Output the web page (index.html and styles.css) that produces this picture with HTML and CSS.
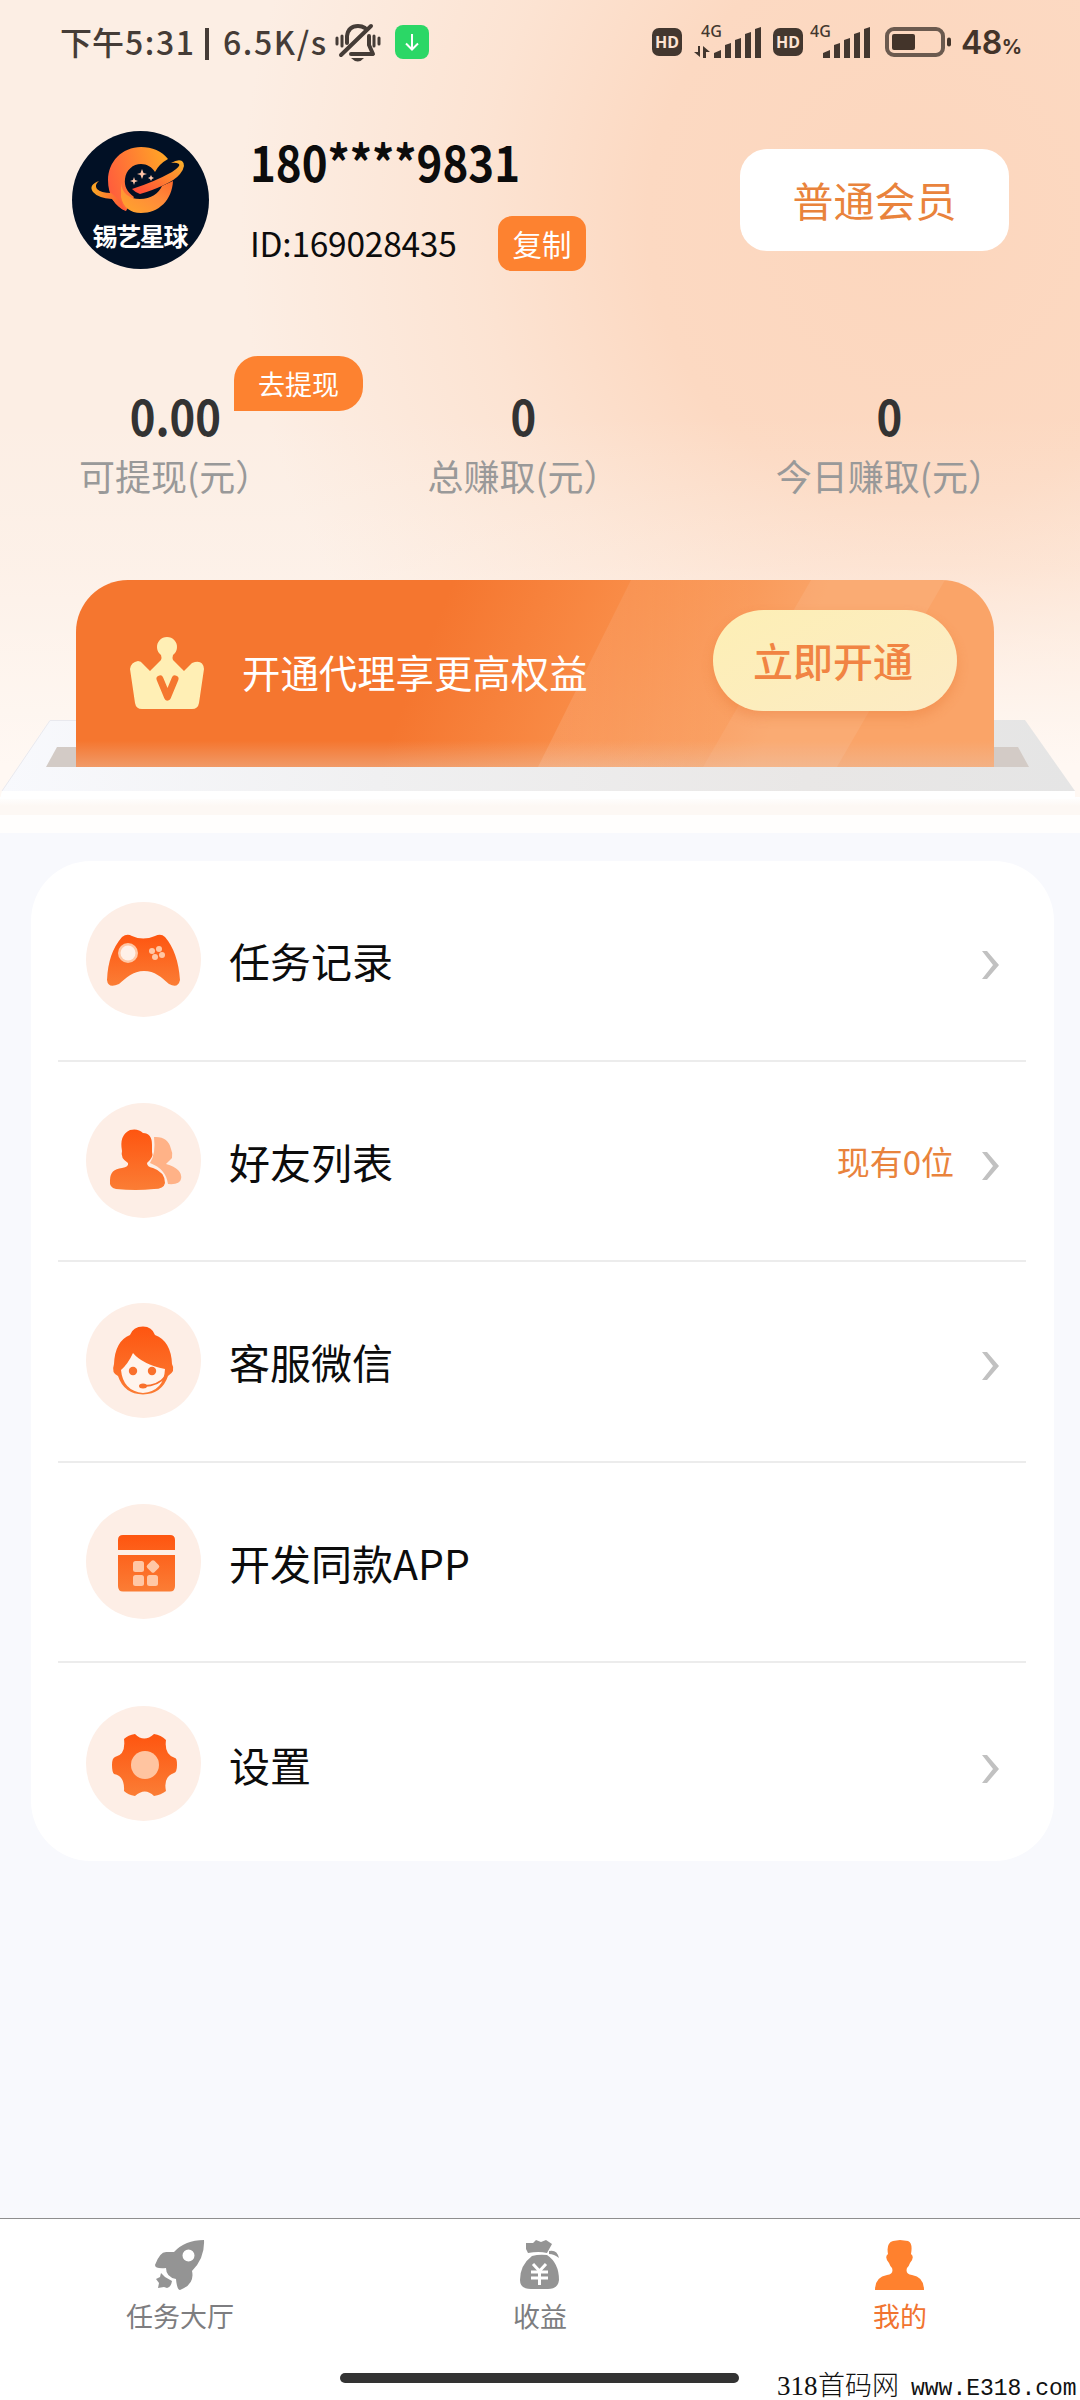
FILE: index.html
```html
<!DOCTYPE html>
<html lang="zh-CN">
<head>
<meta charset="utf-8">
<title>我的</title>
<link rel="stylesheet" href="styles.css">
</head>
<body>
<div class="page">
  <header class="header">
    <div class="status">
      <div class="status-left">
        <span class="clock">下午<em>5:31</em></span><span class="sep"></span><span class="rate">6.5K/s</span>
        <svg class="bell" width="46" height="40" viewBox="0 0 46 40" fill="none" stroke="#453c37" stroke-width="4" stroke-linecap="round">
          <path d="M12 20V13C13 6 17 3 23 3Q27 3 30 5M34 13V22L38 31H16" stroke-linejoin="round"/>
          <path d="M6 32L36 3" stroke-width="4"/>
          <path d="M2 15v6M7 13v10M44 15v6M39 13v10" stroke-width="3"/>
          <path d="M16 35H29Q23 42 16 35Z" fill="#453c37" stroke="none"/>
        </svg>
        <svg class="down" width="34" height="34" viewBox="0 0 34 34"><rect width="34" height="34" rx="8" fill="#2bd766"/><path d="M17 9V24M11 18.500L17 24.500L23 18.500" fill="none" stroke="#fff" stroke-width="2"/></svg>
      </div>
      <div class="status-right">
        <span class="hd">HD</span>
        <svg class="signal" width="68" height="34" viewBox="0 0 68 34" fill="#43372f">
          <text x="7" y="12" textLength="21" class="net">4G</text>
          <path d="M4 21H6V32L0 27H4ZM9 33V21L16 27H12V33Z"/>
          <path d="M20 33V28L27 25V33ZM31 33V20L37 18V33ZM41 33V15L47 13V33ZM51 33V9L57 7V33ZM61 33V4L67 2V33Z"/>
        </svg>
        <span class="hd second">HD</span>
        <svg class="signal second" width="60" height="34" viewBox="0 0 60 34" fill="#43372f">
          <text x="-1" y="12" textLength="21" class="net">4G</text>
          <path d="M12 33V28L19 25V33ZM23 33V20L29 18V33ZM33 33V15L39 13V33ZM43 33V9L49 7V33ZM53 33V4L59 2V33Z"/>
        </svg>
        <svg class="battery" width="66" height="30" viewBox="0 0 66 30"><rect x="2" y="2" width="56" height="26" rx="7" fill="none" stroke="#6b5a4f" stroke-width="4"/><rect x="7" y="7" width="23" height="16" rx="2" fill="#43342a"/><rect x="62" y="10.500" width="4" height="9" rx="2" fill="#43342a"/></svg>
        <span class="pct">48<small>%</small></span>
      </div>
    </div>

    <div class="profile">
      <svg class="avatar" width="137" height="138" viewBox="0 0 137 138">
        <defs>
          <linearGradient id="c" x1="0" y1=".5" x2="1" y2=".2"><stop offset="0" stop-color="#ff5f3c"/><stop offset="1" stop-color="#ffa726"/></linearGradient>
          <linearGradient id="c2" x1="0" y1="1" x2="1" y2="0"><stop offset="0" stop-color="#ffa62c"/><stop offset=".6" stop-color="#ff8a3a"/><stop offset="1" stop-color="#ff6a2c"/></linearGradient>
          <linearGradient id="ring" x1="0" y1="1" x2="1" y2="0"><stop offset="0" stop-color="#ff4438"/><stop offset=".5" stop-color="#ff7a30"/><stop offset="1" stop-color="#f9b32a"/></linearGradient>
          <linearGradient id="tail" x1="0" y1="0" x2="1" y2="0"><stop offset="0" stop-color="#f9a824"/><stop offset="1" stop-color="#ff5238"/></linearGradient>
        </defs>
        <ellipse cx="68.500" cy="69" rx="68.500" ry="69" fill="#011025"/>
        <path d="M96 28C90 20 80 16 69 16C50 16 36 31 36 49C36 64 43 76 54 80L62 66C55 61 52 55 53 48C54 39 61 33 69 33C75 33 80 36 83 41Q87 33 96 28Z" fill="url(#c)"/>
        <path d="M49 52C50 62 57 68 68 68C79 68 87 62 90 55L101 50C100 69 87 82 69 82C58 82 51 76 49 66Z" fill="url(#c2)"/>
        <path d="M60 58Q82 51 100 41Q109 35 107 33Q104 31 99 32Q106 28 110 30Q115 34 108 43Q103 49 92 54Q79 60 68 63Q64 62 60 58Z" fill="url(#ring)"/>
        <path d="M27 50Q22 54 25 58Q29 62 39 62L49 70Q50 75 54 80Q46 76 40 68Q26 67 21 61Q16 54 27 50Z" fill="url(#tail)"/>
        <path d="M70 38L71.500 42L75 43L71.500 44L70 48L68.500 44L65 43L68.500 42ZM62 46L63 49L66 50L63 51L62 54L61 51L58 50L61 49ZM79 44L80 46L82 47L80 48L79 50L78 48L76 47L78 46Z" fill="#ffc4a8"/>
        <text x="20.500" y="115" textLength="96" class="logo-text">锡艺星球</text>
      </svg>
      <div class="who">
        <div class="phone">180****9831</div>
        <div class="idrow"><span class="uid">ID:169028435</span><span class="copy">复制</span></div>
      </div>
      <div class="level">普通会员</div>
    </div>

    <div class="stats">
      <div class="stat"><b>0.00</b><span>可提现(元）</span><i class="withdraw">去提现</i></div>
      <div class="stat"><b>0</b><span>总赚取(元）</span></div>
      <div class="stat"><b>0</b><span>今日赚取(元）</span></div>
    </div>

    <div class="promo">
      <svg class="tray" width="1080" height="113" viewBox="0 0 1080 113">
        <defs>
          <linearGradient id="t" x1="0" y1="0" x2="1" y2="0"><stop offset="0" stop-color="#f8f9fd"/><stop offset=".35" stop-color="#f0f0f1"/><stop offset=".75" stop-color="#e9e7e6"/><stop offset="1" stop-color="#e5e5e5"/></linearGradient>
          <linearGradient id="u" x1="0" y1="0" x2="0" y2="1"><stop offset="0" stop-color="#fff"/><stop offset=".5" stop-color="#fdf8f4"/><stop offset="1" stop-color="#fdf8f4"/></linearGradient>
        </defs>
        <rect y="77" width="1080" height="18" fill="url(#u)"/>
        <rect y="95" width="1080" height="18" fill="#fffefd"/>
        <path d="M50 0H1025L1075 71V79H2V71Z" fill="url(#t)"/>
        <path d="M2 71L50 .5H80" fill="none" stroke="#e9e9ee"/>
        <path d="M2 71H1075V79H0Z" fill="#fff"/>
        <path d="M57 27H1018L1029 47H46Z" fill="#d3cbc6"/>
      </svg>
      <div class="banner">
        <svg class="stripes" width="918" height="187" viewBox="0 0 918 187">
          <defs><linearGradient id="s" x1="0" y1="0" x2="1" y2="0"><stop offset=".1" stop-color="#fff" stop-opacity=".11"/><stop offset=".8" stop-color="#fff" stop-opacity="0"/></linearGradient></defs>
          <path d="M555 0H735L627 187H462Z" fill="url(#s)"/>
          <path d="M735 0H869L761 187H627Z" fill="#fff" fill-opacity=".08"/>
        </svg>
        <svg class="crown" width="74" height="72" viewBox="0 0 74 72">
          <path d="M12 72Q6 72 5 66L0 32Q1 25 8 24Q11 24 13 27L20 34L31 23Q32 21 31 18A10 10 0 1 1 43 18Q42 21 43 23L54 34L62 26Q73 22 74 32L69 66Q68 72 62 72Z" fill="#ffefb5"/>
          <path d="M30 42L37.500 60L45 42" fill="none" stroke="#f5772f" stroke-width="7" stroke-linecap="round" stroke-linejoin="round"/>
        </svg>
        <span class="promo-text">开通代理享更高权益</span>
        <span class="open">立即开通</span>
      </div>
    </div>
  </header>

  <main class="menu">
    <svg width="0" height="0" class="defs"><defs><linearGradient id="o" x1="0" y1="0" x2="0" y2="1"><stop offset="0" stop-color="#fe5510"/><stop offset="1" stop-color="#fb7d35"/></linearGradient></defs></svg>
    <div class="row">
      <svg class="ico" viewBox="0 0 115 115"><circle cx="57.500" cy="57.500" r="57.500" fill="#fdeee6"/>
        <path d="M36 35Q41 31 46 34Q57 39 69 34Q75 31 79 35Q92 50 94 78Q92 87 83 82C75 75 69 69 58 69C47 69 40 76 33 82Q22 87 21 78Q22 51 36 35Z" fill="url(#o)"/>
        <circle cx="42" cy="51" r="10" fill="#ffc7a5"/><circle cx="42" cy="51" r="7.500" fill="#fff1e9"/>
        <g fill="#ffc7a5"><circle cx="66" cy="49" r="3"/><circle cx="73" cy="47" r="3"/><circle cx="69" cy="55" r="3"/><circle cx="76" cy="53" r="3"/></g></svg>
      <span class="label">任务记录</span><svg class="chev" viewBox="0 0 17 28"><path d="M0 0H5L17 14L5 28H0L11 14Z"/></svg>
    </div>
    <div class="row">
      <svg class="ico" viewBox="0 0 115 115"><circle cx="57.500" cy="57.500" r="57.500" fill="#fdeee6"/>
        <path d="M68 34Q82 33 85 46Q87 50 86 55Q83 58 80 61Q97 66 95 76Q94 82 82 81Q80 66 64 60Q70 51 68 34Z" fill="#ffb287"/>
        <path d="M36 48Q33 32 44 27Q52 25 57 30Q66 30 66 42V49Q68 54 61 60Q61 64 67 65Q79 69 79 80Q78 86 68 86Q50 88 30 86Q23 85 24 77Q24 66 36 65Q43 64 42 60Q34 55 36 48Z" fill="url(#o)"/></svg>
      <span class="label">好友列表</span><span class="count">现有0位</span><svg class="chev" viewBox="0 0 17 28"><path d="M0 0H5L17 14L5 28H0L11 14Z"/></svg>
    </div>
    <div class="row">
      <svg class="ico" viewBox="0 0 115 115"><circle cx="57.500" cy="57.500" r="57.500" fill="#fdeee6"/>
        <path d="M44 32Q47 23.500 57 23.500Q66 23.500 69 32Q85 38 86 61Q90 68 82 73Q76 91 57 91.500Q38 91 32 73Q25 70 28 61Q29 38 44 32Z" fill="url(#o)"/>
        <path d="M47 50Q56 61 79 66Q78 88 57 90Q37 88 35 67Q42 61 47 50Z" fill="#fff4ed"/>
        <circle cx="47" cy="68" r="4.200" fill="#f9702c"/><circle cx="66" cy="68" r="4.200" fill="#f9702c"/>
        <path d="M80 73Q72 83 58 83" fill="none" stroke="#f9702c" stroke-width="2"/><ellipse cx="57" cy="83" rx="4" ry="2.500" fill="#f9702c"/></svg>
      <span class="label">客服微信</span><svg class="chev" viewBox="0 0 17 28"><path d="M0 0H5L17 14L5 28H0L11 14Z"/></svg>
    </div>
    <div class="row">
      <svg class="ico" viewBox="0 0 115 115"><circle cx="57.500" cy="57.500" r="57.500" fill="#fdeee6"/>
        <path d="M32 46V36Q32 31 37 31H84Q89 31 89 36V46ZM32 51H89V82Q89 87.500 84 87.500H37Q32 87.500 32 82Z" fill="url(#o)"/>
        <g fill="#ffc7a5"><rect x="47" y="57" width="11" height="11" rx="2.500"/><rect x="47" y="71" width="11" height="11" rx="2.500"/><rect x="61" y="71" width="11" height="11" rx="2.500"/><rect x="62" y="57.500" width="10" height="10" rx="2" transform="rotate(45 67 62.500)"/></g></svg>
      <span class="label">开发同款APP</span>
    </div>
    <div class="row">
      <svg class="ico" viewBox="0 0 115 115"><circle cx="57.500" cy="57.500" r="57.500" fill="#fdeee6"/>
        <path d="M38 33Q42 29 49 28Q58 37 68 28Q75 29 80 34Q78 49 89 52Q91 52 91 59Q91 66 88 67Q77 71 80 85Q75 89 68 90Q59 81 49 90Q42 89 38 85Q39 70 28 68Q26 66 26 59Q26 52 29 51Q40 49 38 33Z" fill="url(#o)"/>
        <circle cx="59" cy="59" r="14" fill="#ffc4a0"/></svg>
      <span class="label">设置</span><svg class="chev" viewBox="0 0 17 28"><path d="M0 0H5L17 14L5 28H0L11 14Z"/></svg>
    </div>
  </main>

  <nav class="tabs">
    <div class="tab">
      <svg width="50" height="50" viewBox="0 0 50 50" fill="#949494"><path fill-rule="evenodd" d="M49 0Q50 18 37 31Q40 44 25 50Q22 50 21 39Q11 37 11 28Q0 29 0 25Q5 11 12 12L19 12Q30 0 49 0ZM33.500 9.500A6 6 0 1 0 33.500 21.500A6 6 0 1 0 33.500 9.500Z"/><path d="M6 33L10 37L17 41Q16 47 12 48L9 47L3 48L4 43L1 39L5 37Z"/></svg>
      <span>任务大厅</span>
    </div>
    <div class="tab">
      <svg width="42" height="50" viewBox="0 0 42 50"><path d="M7 3L14 3L17 0L22 2L27 0L33 4L28 13Q20 11 9 13L7 9ZM13 16Q20 14 28 15Q40 23 40 40Q39 49 29 49H12Q1 49 1 40Q1 25 13 16ZM30 11Q38 9 40 18Q35 14 30 14Z" fill="#949494"/><path d="M14 24L20.500 31L27 24M12 32H29M12 38H29M20.500 31V45" fill="none" stroke="#fff" stroke-width="3"/></svg>
      <span>收益</span>
    </div>
    <div class="tab active">
      <svg width="50" height="50" viewBox="0 0 50 50" fill="#ff812e"><path d="M13 14Q11 3 18 1L25 0L33 1Q38 3 36 14Q40 17 35 23Q34 26 32 28Q30 34 37 35Q49 37 49 50H0Q0 37 12 35Q19 34 17 28Q15 26 14 23Q9 17 13 14Z"/></svg>
      <span>我的</span>
    </div>
    <div class="homebar"></div>
    <div class="mark"><span class="num">318</span><span class="cn">首码网</span><span class="url">www.E318.com</span></div>
  </nav>
</div>
</body>
</html>
```
FILE: styles.css
```css
* { box-sizing: border-box; }
body { margin: 0; font-family: "Noto Sans CJK SC", sans-serif; color: #0c0c0c; }
.page { width: 1080px; height: 2400px; display: flex; flex-direction: column; background: #f8f9fd; position: relative; }
svg { display: block; flex: none; overflow: visible; }
.defs { position: absolute; }

.header {
  height: 833px;
  flex: none;
  background:
    linear-gradient(to bottom, rgba(255,249,245,0) 50%, rgba(255,249,245,.25) 68%, #fff8f3 92%),
    radial-gradient(ellipse 680px 720px at 920px 220px, #fcd6bd 0%, #fcd9c2 40%, rgba(252,224,205,.75) 65%, rgba(252,236,225,0) 100%),
    #fceee4;
}
.status { height: 80px; display: flex; justify-content: space-between; padding: 0 58px 0 60px; color: #453c37; }
.status-left, .status-right { display: flex; align-items: flex-start; }
.clock, .rate { font-size: 32px; line-height: 48px; font-weight: 500; margin-top: 17px; white-space: nowrap; }
.clock { width: 145px; }
.clock em { font-style: normal; letter-spacing: 1.600px; margin-left: 1px; }
.rate { letter-spacing: 1.600px; width: 112px; }
.sep { width: 4px; height: 32px; margin: 28px 14px 0 0; background: #453c37; }
.bell { margin-top: 23px; }
.down { margin: 25px 0 0 14px; }
.hd { width: 30px; height: 28px; border-radius: 7px; margin: 28px 0 0; background: #43372f; color: #fde3d2; font: 700 16px/28px "Noto Sans", sans-serif; text-align: center; }
.signal { margin: 25px 0 0 12px; }
.hd.second { margin-left: 11px; }
.signal.second { margin-left: 8px; }
.net { font: 500 16px "Noto Sans", sans-serif; }
.battery { margin: 27px 0 0 14px; }
.pct { font: 600 32px/48px "Inter", sans-serif; margin: 19px 0 0 10px; width: 61px; white-space: nowrap; color: #43342a; letter-spacing: -.5px; }
.pct small { font-size: 20px; font-weight: 700; }

.profile { display: flex; padding: 51px 71px 0 72px; height: 276px; }
.logo-text { font-size: 25px; font-weight: 700; fill: #fff; }
.who { margin-left: 41px; width: 336px; }
.phone { font-size: 49px; line-height: 70px; font-weight: 700; color: #0c0c0c; margin-top: -5px; transform: scaleX(.895); transform-origin: left; }
.idrow { display: flex; align-items: center; margin-top: 20px; height: 55px; }
.uid { font-size: 33.500px; line-height: 55px; width: 248px; letter-spacing: -.25px; margin-top: -2px; }
.copy { width: 88px; height: 55px; border-radius: 14px; background: #fd8230; color: #fff; font-size: 29.500px; line-height: 54px; text-align: center; }
.level { margin: 18px 0 0 auto; width: 269px; height: 102px; border-radius: 27px; background: #fff; color: #e9833c; font-size: 41px; line-height: 101px; text-align: center; }

.stats { display: flex; justify-content: space-between; padding: 29px 76px 0 79px; height: 224px; }
.stat { position: relative; display: flex; flex-direction: column; align-items: center; }
.stat b { font-size: 49px; line-height: 64px; font-weight: 700; color: #333; transform: translateY(-2px) scaleX(.89); }
.stat span { font-size: 36px; line-height: 52px; color: #999; }
.withdraw { position: absolute; left: 155px; top: -29px; width: 129px; height: 55px; border-radius: 24px 24px 24px 0; background: #fd8230; color: #fff; font-size: 27px; line-height: 56px; font-style: normal; text-align: center; }

.promo { position: relative; height: 253px; padding: 0 86px 0 76px; }
.tray { position: absolute; left: 0; top: 140px; }
.banner { position: relative; height: 187px; border-radius: 52px 52px 0 0; overflow: hidden; display: flex; padding-left: 54px; background: linear-gradient(to bottom, rgba(236,190,160,0) 86%, rgba(236,190,160,.5)), linear-gradient(112deg, #f5762f 38%, #f98d48 57%, #faa468 76%); }
.stripes { position: absolute; left: 0; top: 0; }
.crown { margin-top: 57px; }
.promo-text { position: relative; margin: 63px 0 0 38px; font-size: 38.400px; line-height: 56px; color: #fff; white-space: nowrap; }
.open { position: relative; margin: 30px 37px 0 auto; padding-right: 4px; width: 244px; height: 101px; border-radius: 51px; background: linear-gradient(150deg, #fdefb5, #fcebc5); color: #f18443; font-size: 40px; font-weight: 500; line-height: 101px; text-align: center; box-shadow: 0 6px 12px rgba(230,110,40,.3); }

.menu { margin: 28px 26px 0 31px; height: 1000px; border-radius: 60px; background: #fff; padding: 0 28px 0 27px; display: flex; flex-direction: column; }
.row { height: 200.600px; flex: none; display: flex; align-items: center; padding: 0 27px 0 28px; border-bottom: 2px solid #ececec; }
.row:last-child { border: 0; }
.ico { width: 115px; height: 115px; margin-top: -1px; }
.label { font-size: 41px; line-height: 60px; margin-left: 28px; flex: 1; }
.count { font-size: 33px; line-height: 50px; color: #e9833c; margin-right: 28px; }
.chev { width: 17px; height: 28px; fill: #c1c1c1; margin-top: 10px; }

.tabs { position: relative; margin-top: auto; height: 182px; background: #fff; border-top: 1px solid #8e8e8e; display: flex; }
.tab { flex: 1; display: flex; flex-direction: column; align-items: center; padding-top: 21px; font-size: 27px; line-height: 38px; color: #7d7d80; }
.tab span { margin-top: 7px; }
.tab.active { color: #f17430; }
.homebar { position: absolute; left: 340px; top: 154px; width: 399px; height: 10px; border-radius: 5px; background: #333; }
.mark { position: absolute; left: 777px; bottom: 0; display: flex; align-items: baseline; color: #111; line-height: 28px; white-space: nowrap; height: 30px; }
.num { font: 27px/28px "Liberation Serif", serif; width: 41px; }
.cn { font-size: 27px; line-height: 28px; font-weight: 300; width: 93px; }
.url { font: 23px/28px "Liberation Mono", monospace; }
```
